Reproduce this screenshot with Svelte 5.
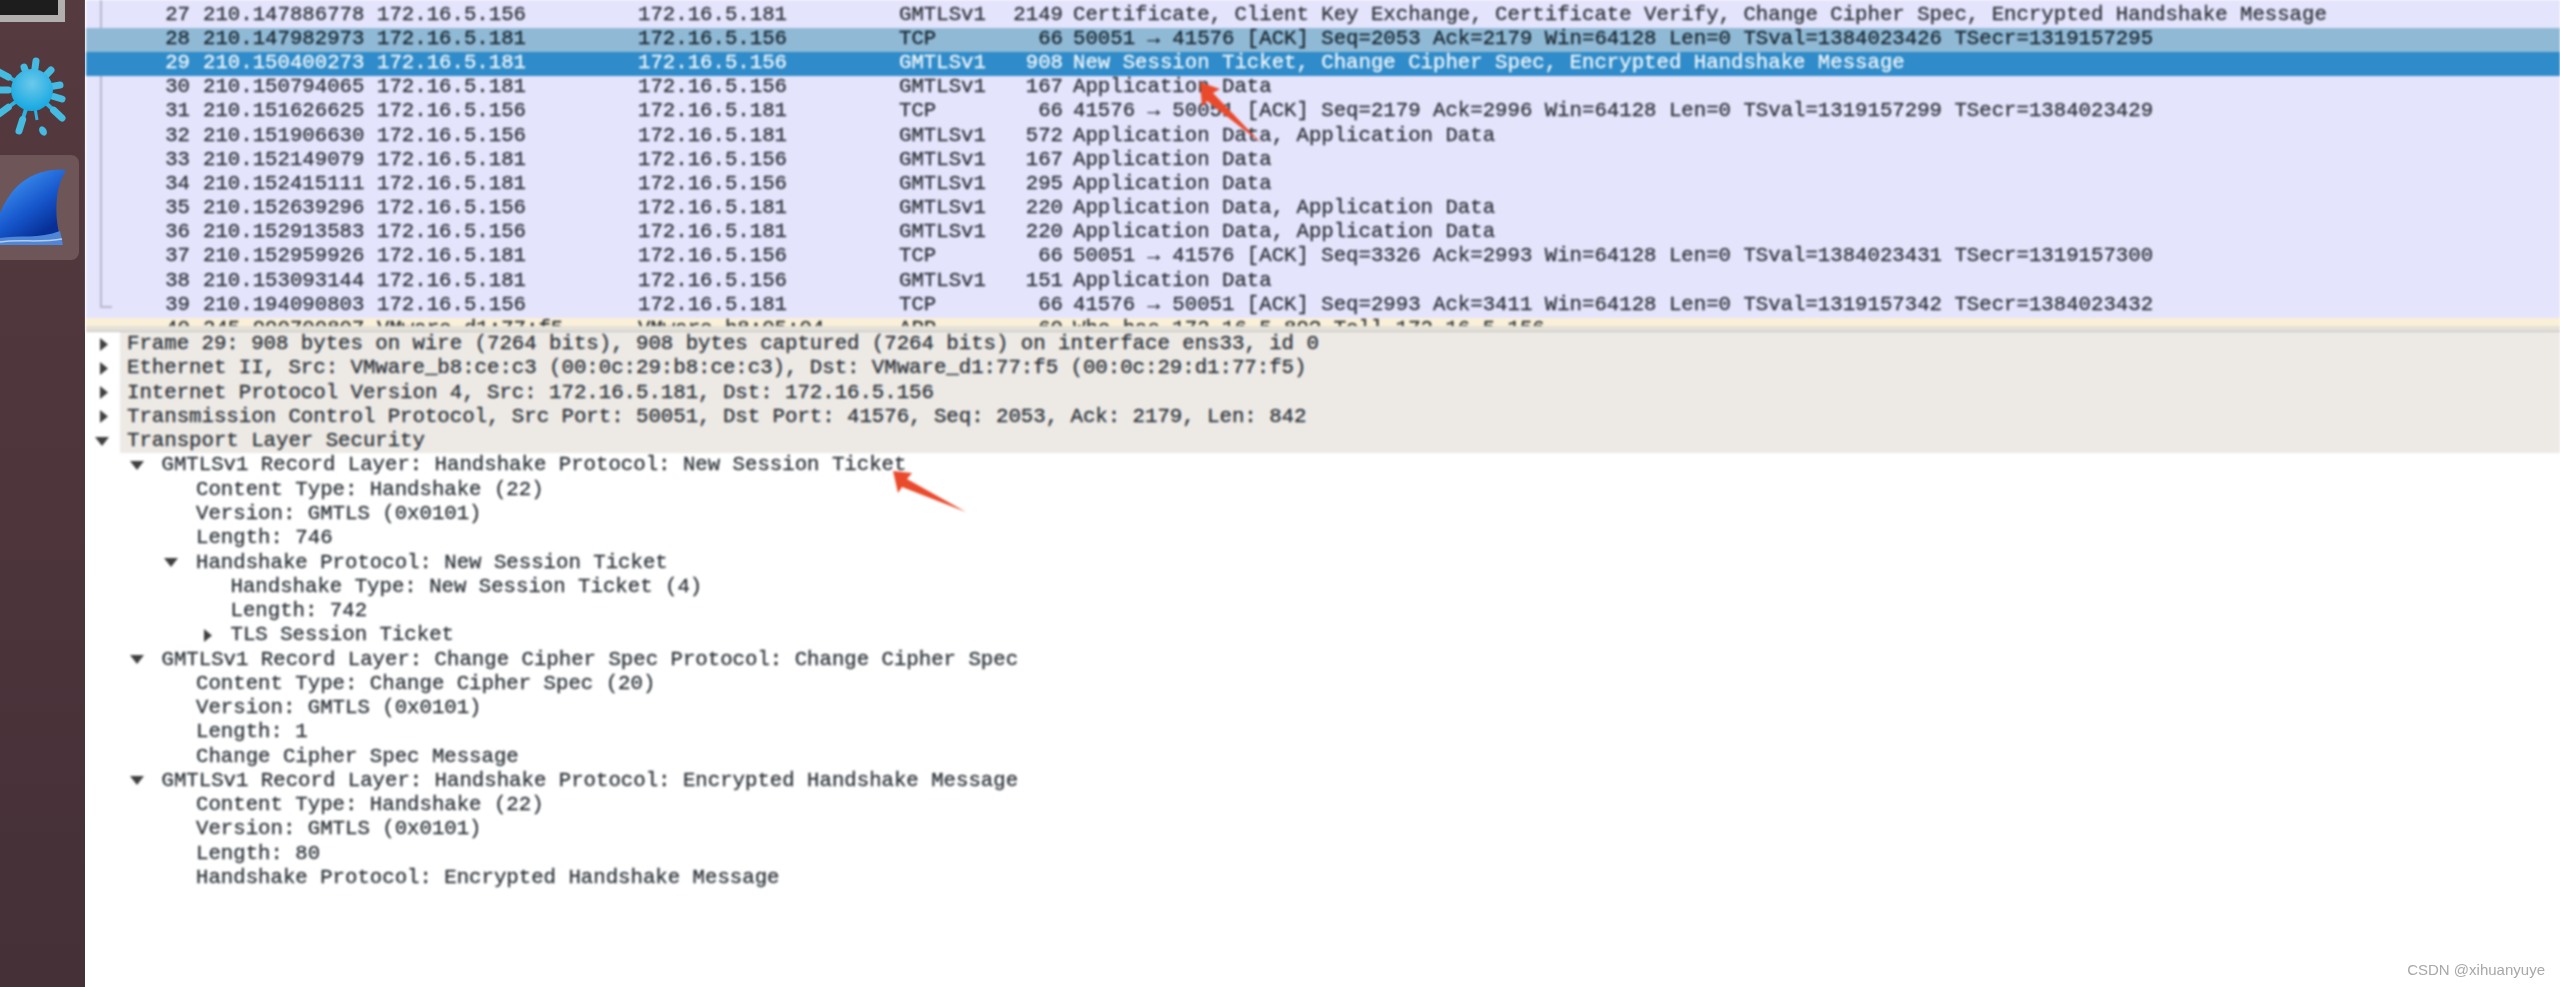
<script>
  const A = '172.16.5.181';
  const B = '172.16.5.156';
  const AD = 'Application Data';
  const packets = [
    [27, '210.147886778', B, A, 'GMTLSv1', 2149, 'Certificate, Client Key Exchange, Certificate Verify, Change Cipher Spec, Encrypted Handshake Message'],
    [28, '210.147982973', A, B, 'TCP', 66, '50051 → 41576 [ACK] Seq=2053 Ack=2179 Win=64128 Len=0 TSval=1384023426 TSecr=1319157295', 'related'],
    [29, '210.150400273', A, B, 'GMTLSv1', 908, 'New Session Ticket, Change Cipher Spec, Encrypted Handshake Message', 'selected'],
    [30, '210.150794065', A, B, 'GMTLSv1', 167, AD],
    [31, '210.151626625', B, A, 'TCP', 66, '41576 → 50051 [ACK] Seq=2179 Ack=2996 Win=64128 Len=0 TSval=1319157299 TSecr=1384023429'],
    [32, '210.151906630', B, A, 'GMTLSv1', 572, AD + ', ' + AD],
    [33, '210.152149079', A, B, 'GMTLSv1', 167, AD],
    [34, '210.152415111', A, B, 'GMTLSv1', 295, AD],
    [35, '210.152639296', B, A, 'GMTLSv1', 220, AD + ', ' + AD],
    [36, '210.152913583', B, A, 'GMTLSv1', 220, AD + ', ' + AD],
    [37, '210.152959926', A, B, 'TCP', 66, '50051 → 41576 [ACK] Seq=3326 Ack=2993 Win=64128 Len=0 TSval=1384023431 TSecr=1319157300'],
    [38, '210.153093144', A, B, 'GMTLSv1', 151, AD],
    [39, '210.194090803', B, A, 'TCP', 66, '41576 → 50051 [ACK] Seq=2993 Ack=3411 Win=64128 Len=0 TSval=1319157342 TSecr=1384023432'],
    [40, '245.990700807', 'VMware_d1:77:f5', 'VMware_b8:05:04', 'ARP', 60, 'Who has 172.16.5.89? Tell 172.16.5.156', 'arp']
  ];

  // [level, arrow (r = closed, d = open, '' = leaf), text]
  const details = [
    [0, 'r', 'Frame 29: 908 bytes on wire (7264 bits), 908 bytes captured (7264 bits) on interface ens33, id 0'],
    [0, 'r', 'Ethernet II, Src: VMware_b8:ce:c3 (00:0c:29:b8:ce:c3), Dst: VMware_d1:77:f5 (00:0c:29:d1:77:f5)'],
    [0, 'r', 'Internet Protocol Version 4, Src: 172.16.5.181, Dst: 172.16.5.156'],
    [0, 'r', 'Transmission Control Protocol, Src Port: 50051, Dst Port: 41576, Seq: 2053, Ack: 2179, Len: 842'],
    [0, 'd', 'Transport Layer Security'],
    [1, 'd', 'GMTLSv1 Record Layer: Handshake Protocol: New Session Ticket'],
    [2, '', 'Content Type: Handshake (22)'],
    [2, '', 'Version: GMTLS (0x0101)'],
    [2, '', 'Length: 746'],
    [2, 'd', 'Handshake Protocol: New Session Ticket'],
    [3, '', 'Handshake Type: New Session Ticket (4)'],
    [3, '', 'Length: 742'],
    [3, 'r', 'TLS Session Ticket'],
    [1, 'd', 'GMTLSv1 Record Layer: Change Cipher Spec Protocol: Change Cipher Spec'],
    [2, '', 'Content Type: Change Cipher Spec (20)'],
    [2, '', 'Version: GMTLS (0x0101)'],
    [2, '', 'Length: 1'],
    [2, '', 'Change Cipher Spec Message'],
    [1, 'd', 'GMTLSv1 Record Layer: Handshake Protocol: Encrypted Handshake Message'],
    [2, '', 'Content Type: Handshake (22)'],
    [2, '', 'Version: GMTLS (0x0101)'],
    [2, '', 'Length: 80'],
    [2, '', 'Handshake Protocol: Encrypted Handshake Message']
  ];

  // splash rays: tips, the blob centre is 32,38 in the svg below
  const cx = 32, cy = 38;
  const rays = [[36, 9], [24, 15], [51, 18], [60, 33], [62, 47], [62, 66], [19, 79], [-1, 62], [-1, 38], [-1, 20]].map(([x, y]) => ({
    x, y,
    nx: cx + (x - cx) * 0.72,
    ny: cy + (y - cy) * 0.72
  }));
</script>

<div class="screen">
  <aside class="dock">
    <div class="thumb"></div>
    <svg class="splash" width="84" height="88" viewBox="0 0 84 88" aria-hidden="true">
      <defs>
        <radialGradient id="blob" cx="0.5" cy="0.35" r="0.65">
          <stop offset="0" stop-color="#6cc9ea" />
          <stop offset="1" stop-color="#14a8e2" />
        </radialGradient>
      </defs>
      {#each rays as r}
        <line x1={cx} y1={cy} x2={r.x} y2={r.y} stroke="#2fb2e0" stroke-width="4" stroke-linecap="round" />
        <line x1={r.nx} y1={r.ny} x2={r.x} y2={r.y} stroke="#45bbe2" stroke-width="7" stroke-linecap="round" />
      {/each}
      <line x1="32" y1="38" x2="37" y2="68" stroke="#2fb2e0" stroke-width="3" />
      <ellipse cx="43" cy="79" rx="3.5" ry="5" transform="rotate(-30 43 79)" fill="#45bbe2" />
      <circle cx={cx} cy={cy} r="21" fill="url(#blob)" />
    </svg>
    <div class="tile">
      <svg width="79" height="105" viewBox="0 0 79 105" aria-hidden="true">
        <defs>
          <linearGradient id="fin" x1="0.25" y1="0.1" x2="0.75" y2="0.9">
            <stop offset="0" stop-color="#3b8cec" />
            <stop offset="0.5" stop-color="#1656cc" />
            <stop offset="0.9" stop-color="#072f96" />
          </linearGradient>
        </defs>
        <path d="M66 15 C46 13 24 20 10 40 C4 48 2 54 0 58 L0 90 L63 90 C58 78 55 62 57 42 C58 32 61 24 66 15 Z" fill="url(#fin)" />
        <path d="M0 83 C18 80 40 84 60 76 L63 90 L0 90 Z" fill="#4f86d8" />
        <path d="M0 87 C20 84 40 88 62 84" fill="none" stroke="#b4ccf0" stroke-width="1.5" />
      </svg>
    </div>
  </aside>

  <main class="main">
    <section class="packets">
      <div class="tree"></div>
      {#each packets as [no, time, src, dst, proto, len, info, kind]}
        <div class="packet {kind ?? ''}">
          <span class="num">{no}</span>
          <span class="time">{time}</span>
          <span>{src}</span>
          <span>{dst}</span>
          <span>{proto}</span>
          <span class="num">{len}</span>
          <span class="info">{info}</span>
        </div>
      {/each}
    </section>
    <div class="split"></div>
    <section class="details">
      {#each details as [level, arrow, text]}
        <div class="node" class:top={level === 0}>
          <span class="gutter" style="width: {34 + level * 34.5}px">
            {#if arrow === 'r'}
              <svg width="10" height="13" viewBox="0 0 10 13" aria-hidden="true"><path d="M1 0 L9 6.5 L1 13 Z" /></svg>
            {:else if arrow === 'd'}
              <svg width="14" height="9" viewBox="0 0 14 9" aria-hidden="true"><path d="M0 0 H14 L7 9 Z" /></svg>
            {/if}
          </span>
          <span class="label">{text}</span>
        </div>
      {/each}
    </section>

    <svg class="marks" width="2475" height="987" viewBox="85 0 2475 987" aria-hidden="true">
      <path d="M1200 82 L1220 89 L1213 93 L1261 143 L1207 101 L1202 107 Z" fill="#ea4a2c" />
      <path d="M893 471 L912 473 L907 479 L966 512 L902 487 L898 493 Z" fill="#ea4a2c" />
    </svg>
  </main>

  <span class="credit">CSDN @xihuanyuye</span>
</div>

<style>
  :global(body) {
    margin: 0;
    background: #fff;
  }
  .screen {
    display: flex;
    position: relative;
    width: 2560px;
    height: 987px;
    overflow: hidden;
    background: #fff;
  }

  .dock {
    flex: none;
    display: flex;
    flex-direction: column;
    width: 85px;
    background: linear-gradient(#553a3f, #453037);
    filter: blur(0.6px);
  }
  .thumb {
    box-sizing: border-box;
    width: 65px;
    height: 22px;
    background: #1d1d1d;
    border-right: 7px solid #b2b0ae;
    border-bottom: 7px solid #b2b0ae;
  }
  .splash {
    display: block;
    margin-top: 30px;
  }
  .tile {
    width: 79px;
    height: 105px;
    margin-top: 15px;
    background: #6e5558;
    border-radius: 0 8px 8px 0;
  }
  .tile svg {
    display: block;
  }

  .main {
    position: relative;
    flex: 1;
    min-width: 0;
    padding-left: 1px;
    font: 20.7px/24px "Liberation Mono", monospace;
    color: #2c3238;
    -webkit-text-stroke: 0.3px currentColor;
    filter: blur(0.9px);
  }

  .packets {
    position: relative;
    box-sizing: border-box;
    height: 326px;
    padding-top: 3.8px;
    overflow: hidden;
    background: #e5e4fd;
  }
  .tree {
    position: absolute;
    top: 0;
    left: 14px;
    width: 10px;
    height: 306px;
    border-left: 2px solid #b6b6ca;
    border-bottom: 2px solid #b6b6ca;
  }
  .packet {
    position: relative;
    display: grid;
    grid-template-columns: 104px 187px 261px 261px 99px 65px 1fr;
    height: 24.17px;
    line-height: 22px;
    white-space: pre;
  }
  .packet .num {
    text-align: right;
  }
  .packet .time {
    padding-left: 13px;
  }
  .packet .info {
    padding-left: 10px;
  }
  .packet.related {
    background: #8fb9d5;
    color: #18242e;
  }
  .packet.selected {
    background: #2f8bc9;
    color: #f2f8fc;
  }
  .packet.arp {
    background: #faf0d7;
  }

  .split {
    height: 5px;
    background: #e4e1d9;
    border-bottom: 1px solid #c4c2bc;
  }

  .details {
    display: flex;
    flex-direction: column;
  }
  .node {
    display: flex;
    align-items: center;
    height: 24.27px;
    white-space: pre;
  }
  .gutter {
    flex: none;
    display: flex;
    align-items: center;
    justify-content: flex-end;
    padding-right: 11px;
    box-sizing: border-box;
  }
  .gutter svg {
    fill: #3f3f3f;
  }
  .label {
    padding-left: 7px;
  }
  .node.top .label {
    flex: 1;
    align-self: stretch;
    line-height: 24.27px;
    background: #edeae6;
  }

  .marks {
    position: absolute;
    top: 0;
    left: 0;
    pointer-events: none;
  }

  .credit {
    position: absolute;
    right: 15px;
    bottom: 8px;
    font: 15px/18px "Liberation Sans", sans-serif;
    color: #a8a8a8;
  }
</style>
